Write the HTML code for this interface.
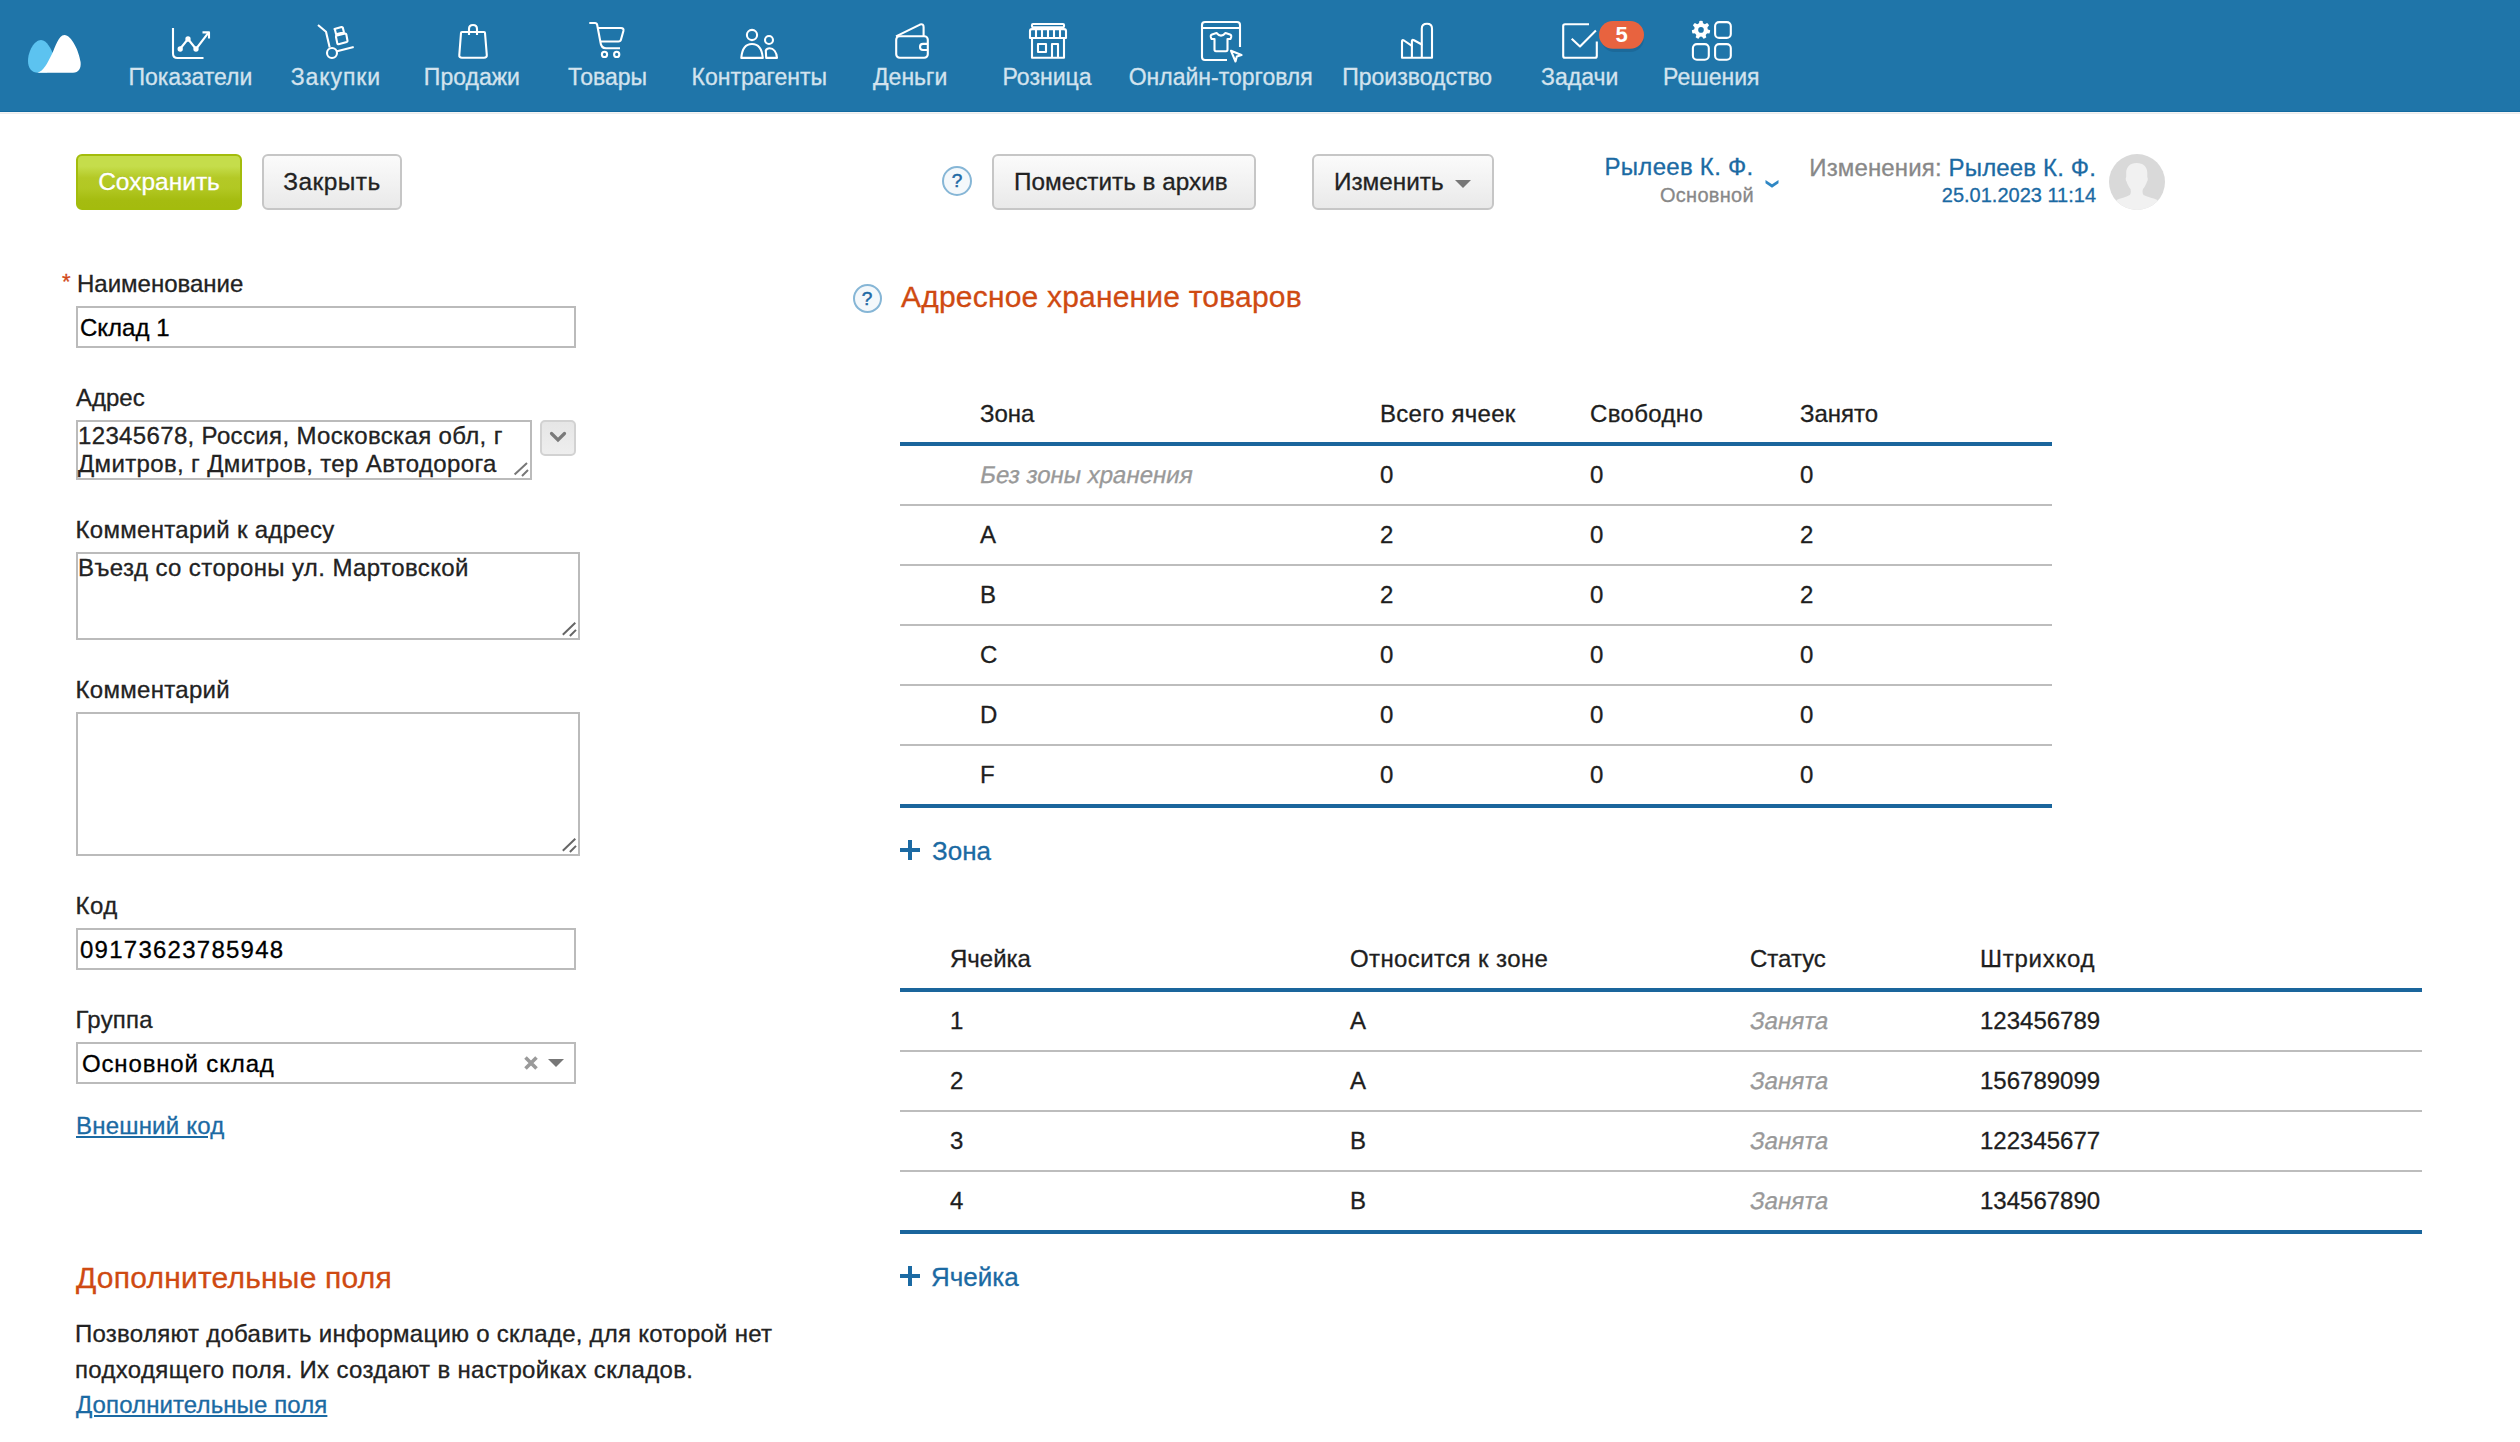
<!DOCTYPE html>
<html><head><meta charset="utf-8">
<style>
html,body{margin:0;padding:0;width:2520px;height:1442px;overflow:hidden;background:#fff;}
body{position:relative;font-family:"Liberation Sans",sans-serif;color:#222;}
.t,.nl,.lbl,.h2,.td{-webkit-text-stroke:0.3px;}
.help{-webkit-text-stroke:0.5px;}
.t{position:absolute;white-space:nowrap;line-height:1;}
.hdr{position:absolute;left:0;top:0;width:2520px;height:111px;background:#1f75a9;border-bottom:1px solid #126aa0;}
.hdrsh{position:absolute;left:0;top:112px;width:2520px;height:2px;background:linear-gradient(#f4f4f4 50%,#ececec 50%);}
.nl{position:absolute;top:65.5px;width:300px;text-align:center;font-size:23px;line-height:1;color:#d3e3ee;white-space:nowrap;}
.btn{position:absolute;box-sizing:border-box;height:56px;top:154px;border:2px solid #c6c6c6;border-radius:6px;background:linear-gradient(#fbfbfb,#e9e9e9);}
.inp{position:absolute;box-sizing:border-box;border:2px solid #bbb;background:#fff;}
.lbl{position:absolute;white-space:nowrap;line-height:1;font-size:24px;color:#222;left:77px;}
.help{position:absolute;box-sizing:border-box;width:30px;height:30px;border-radius:50%;border:2px solid #86b6d6;background:#f4f8fb;color:#1f6aa5;font-size:19px;font-weight:normal;text-align:center;line-height:26px;}
.grip{position:absolute;}
.h2{position:absolute;white-space:nowrap;line-height:1;font-size:30px;color:#cf4a12;}
.link{color:#1b6aa3;}
.bl{position:absolute;height:4px;background:#1a659c;}
.gl{position:absolute;height:2px;background:#bdbdbd;}
.td{position:absolute;white-space:nowrap;line-height:1;font-size:24px;color:#1e1e1e;}
.it{color:#999;transform:skewX(-11deg);transform-origin:0 20px;}
</style></head>
<body>
<!-- HEADER -->
<div class="hdr"></div>
<div class="hdrsh"></div>
<svg style="position:absolute;left:0;top:0" width="2520" height="112" viewBox="0 0 2520 112">
  <!-- logo -->
  <path d="M41 40 C34.5 40 28 51 28 61 C28 68.5 32 72.7 38 72.7 L47 72.7 L54 56 C51 49 47 40 41 40 Z" fill="#5cc3f0"/>
  <path d="M64.4 35 C71.5 35 79 51 80.6 62 C81.3 68.5 78.5 72.7 73 72.7 L37.5 72.7 C43.5 71 47.5 63 51.6 54.7 C55.5 47 58.5 35 64.4 35 Z" fill="#fff"/>
  <g fill="none" stroke="#fff" stroke-width="2.1" stroke-linecap="butt" stroke-linejoin="round">
    <!-- Показатели -->
    <path d="M173 28 V53.5 Q173 58 177.5 58 H203.5"/>
    <path d="M180 49 L188 39 L196 49 L208.5 32.6"/>
    <path d="M202.5 32.4 H209 V38.5"/>
    <circle cx="180.2" cy="49" r="1.6" fill="#fff"/><circle cx="188" cy="39" r="1.6" fill="#fff"/><circle cx="196" cy="49" r="1.6" fill="#fff"/>
    <!-- Закупки -->
    <path d="M318 25 L326 31.7 L329.7 47.5"/>
    <circle cx="332" cy="53" r="5"/>
    <path d="M337 51.3 L353.7 46.9"/>
    <path d="M334.5 29 L341.5 27 Q342.6 26.8 342.9 27.9 L343.9 32.3 L336.1 34.3 L335 29.9 Q334.7 29.2 334.5 29 Z"/>
    <path d="M336.1 35.8 L345 33.6 Q346 33.4 346.3 34.4 L347.5 40.8 Q347.7 41.8 346.7 42.1 L338.6 44.2 Q337.6 44.4 337.3 43.4 L336 37 Z"/>
    <!-- Продажи bag -->
    <path d="M462 32 H484 Q485 32 485 33 L486.8 55 Q487 57.8 484 57.8 H462 Q459 57.8 459.3 55 L461 33 Q461 32 462 32 Z"/>
    <path d="M469 35 V29 Q469 25 473 25 Q477 25 477 29 V35"/>
    <!-- Товары cart -->
    <path d="M589.3 23 H595 Q596.8 23 597.2 25 L600.4 41.9 Q601 48.3 606 48.3 H620"/>
    <path d="M597.8 28 H621 Q624 28 623.4 31 L621 39.5 Q620.5 41.5 618.5 41.5 H600.5"/>
    <circle cx="604.5" cy="54.4" r="2.6"/>
    <circle cx="616.7" cy="54.4" r="2.6"/>
    <!-- Контрагенты -->
    <circle cx="752" cy="35" r="5.1"/>
    <path d="M741.3 57.9 C742 49 746 44 752 44 C758 44 762 49 762.8 57.9 Z"/>
    <circle cx="769" cy="40" r="4"/>
    <path d="M766.2 57.9 L765.8 50.5 C766.5 49 768 48.3 769.5 48.3 C773.5 48.3 776.5 52 777 57.9 Z"/>
    <!-- Деньги wallet -->
    <rect x="896.2" y="36.2" width="31.6" height="21.5" rx="3.5"/>
    <path d="M896 36.4 L920 24.6 Q923.6 23.3 923.6 27 V36"/>
    <path d="M927.8 43.9 H923 Q920 43.9 920 47 Q920 50 923 50 H927.8"/>
    <!-- Розница store -->
    <rect x="1032" y="24" width="32" height="3.2" rx="1"/>
    <path d="M1030 38 V31 Q1030 29.1 1032 29.1 H1064 Q1066 29.1 1066 31 V38 Z"/>
    <path d="M1036 29 V38 M1042 29 V38 M1048 29 V38 M1054 29 V38 M1060 29 V38"/>
    <path d="M1032 38 V57.8 H1064 V38"/>
    <rect x="1038" y="44" width="8" height="8"/>
    <path d="M1052 57.8 V44 H1058 V57.8"/>
    <!-- Онлайн-торговля -->
    <path d="M1240 47 V25 Q1240 22 1237 22 H1205 Q1202 22 1202 25 V57 Q1202 60 1205 60 H1227"/>
    <path d="M1202 28 H1240"/>
    <path d="M1216.5 33 Q1221 38.2 1225.5 33 L1230 34.5 Q1231.5 35 1231.2 37 L1230.5 39 H1227.5 V49.5 Q1227.5 51.2 1226 51.2 H1216 Q1214.5 51.2 1214.5 49.5 V39 H1211.5 L1210.8 37 Q1210.5 35 1212 34.5 Z"/>
    <path d="M1231 50.8 L1241.5 55 L1236.8 56.5 L1235.5 61.5 Z"/>
    <!-- Производство -->
    <path d="M1402 57.8 V41.5 Q1402 39.5 1404 40.5 L1411.9 45.8 V41 Q1411.9 39.2 1414 40.3 L1421.8 44.5 V28.5 Q1421.8 23.8 1427 23.8 Q1432 23.8 1432 28.5 V57.8 Z"/>
    <path d="M1411.9 45.8 V57.8 M1421.8 44.5 V57.8"/>
    <!-- Задачи -->
    <path d="M1589 24.2 H1565 Q1563.2 24.2 1563.2 26 V56 Q1563.2 57.8 1565 57.8 H1595 Q1596.8 57.8 1596.8 56 V41.4"/>
    <path d="M1571.7 38.8 L1580 46.5 L1595.9 30.6"/>
    <!-- Решения -->
    <rect x="1715.1" y="22.1" width="15.7" height="15.8" rx="4"/>
    <rect x="1692.9" y="44.1" width="15.9" height="15.7" rx="4"/>
    <rect x="1715.1" y="44.1" width="15.7" height="15.7" rx="4"/>
  </g>
  <!-- gear -->
  <g transform="translate(1701 29.9)" fill="#fff">
    <circle r="6.9"/>
    <path transform="rotate(0.00)" d="M-2.1 -6 L-1.6 -9 Q0 -9.5 1.6 -9 L2.1 -6 Z"/><path transform="rotate(51.43)" d="M-2.1 -6 L-1.6 -9 Q0 -9.5 1.6 -9 L2.1 -6 Z"/><path transform="rotate(102.86)" d="M-2.1 -6 L-1.6 -9 Q0 -9.5 1.6 -9 L2.1 -6 Z"/><path transform="rotate(154.29)" d="M-2.1 -6 L-1.6 -9 Q0 -9.5 1.6 -9 L2.1 -6 Z"/><path transform="rotate(205.71)" d="M-2.1 -6 L-1.6 -9 Q0 -9.5 1.6 -9 L2.1 -6 Z"/><path transform="rotate(257.14)" d="M-2.1 -6 L-1.6 -9 Q0 -9.5 1.6 -9 L2.1 -6 Z"/><path transform="rotate(308.57)" d="M-2.1 -6 L-1.6 -9 Q0 -9.5 1.6 -9 L2.1 -6 Z"/>
    <circle r="2.8" fill="#1f75a9"/>
  </g>
  <!-- badge -->
  <rect x="1601" y="24.5" width="43" height="27.5" rx="13.75" fill="#1a5f8c" opacity="0.55"/>
  <rect x="1599" y="21" width="45" height="27.7" rx="13.85" fill="#e8633f"/>
</svg>
<div class="t" style="left:1599px;top:24.2px;width:45px;text-align:center;font-size:22px;font-weight:bold;color:#fff;-webkit-text-stroke:0;">5</div>

<div class="nl" style="left:40.4px">Показатели</div>
<div class="nl" style="left:185.9px;letter-spacing:0.9px">Закупки</div>
<div class="nl" style="left:321.9px">Продажи</div>
<div class="nl" style="left:457.5px">Товары</div>
<div class="nl" style="left:609.3px">Контрагенты</div>
<div class="nl" style="left:760.2px">Деньги</div>
<div class="nl" style="left:897px">Розница</div>
<div class="nl" style="left:1070.7px">Онлайн-торговля</div>
<div class="nl" style="left:1267.2px">Производство</div>
<div class="nl" style="left:1429.7px">Задачи</div>
<div class="nl" style="left:1561.3px">Решения</div>

<!-- TOOLBAR -->
<div class="btn" style="left:76px;width:166px;border-color:#a3bc0c;background:linear-gradient(#c5dd4b 0%,#c5dd4b 20%,#b4c926 42%,#b2c823 62%,#a5bc10 85%,#a4bb0e 100%);"></div>
<div class="t" style="left:76px;width:166px;text-align:center;top:169.7px;font-size:24.5px;color:#fff;text-shadow:0 -1px 0 rgba(0,0,0,0.08);">Сохранить</div>
<div class="btn" style="left:262px;width:140px;"></div>
<div class="t" style="left:262px;width:140px;text-align:center;top:169.7px;font-size:24.5px;color:#222;letter-spacing:0.45px;">Закрыть</div>

<div class="help" style="left:942px;top:166px;">?</div>
<div class="btn" style="left:992px;width:264px;"></div>
<div class="t" style="left:1014px;top:169.7px;font-size:24.3px;color:#222;">Поместить в архив</div>
<div class="btn" style="left:1312px;width:182px;"></div>
<div class="t" style="left:1334px;top:169.7px;font-size:24.3px;color:#222;">Изменить</div>
<svg style="position:absolute;left:1455px;top:180px" width="16" height="8"><path d="M0 0 H16 L8 8 Z" fill="#777"/></svg>

<div class="t" style="right:766.5px;top:155.4px;font-size:24px;color:#1b6aa3;letter-spacing:0.28px;">Рылеев К. Ф.</div>
<div class="t" style="right:766px;top:185px;font-size:20px;color:#888;letter-spacing:0.3px;">Основной</div>
<svg style="position:absolute;left:1765px;top:179px" width="14" height="9"><path d="M0.5 1 L7 5.2 L13.5 1 V4.2 L7 8.8 L0.5 4.2 Z" fill="#2f87c4"/></svg>

<div class="t" style="right:424px;top:155.5px;font-size:24px;color:#888;letter-spacing:0.15px;">Изменения: <span style="color:#1b6aa3">Рылеев К. Ф.</span></div>
<div class="t" style="right:424px;top:185px;font-size:20px;color:#1b6aa3;">25.01.2023 11:14</div>
<svg style="position:absolute;left:2109px;top:154px" width="56" height="56" viewBox="0 0 56 56">
  <defs><clipPath id="av"><circle cx="28" cy="28" r="28"/></clipPath></defs>
  <circle cx="28" cy="28" r="28" fill="#d9d9d9"/>
  <g clip-path="url(#av)" fill="#f1f1f1">
    <path d="M27.6 9 C21 9 17.2 13 17.2 19 L17.2 23 C16.5 24 16.5 26.5 17.5 27.5 C18.3 30 19.5 32.5 21.5 35 C22 37 22 39.5 20.8 41 C17 43 11 44.5 7.5 46 L7.5 60 L48.5 60 L48.5 46 C45 44.5 39 43 34.5 41 C33.3 39.5 33.3 37 34 35 C36 32.5 37.2 30 38 27.5 C39 26.5 39 24 38.3 23 L38.3 19 C38.3 13 34.5 9 27.6 9 Z"/>
  </g>
</svg>

<!-- LEFT FORM -->
<div class="t" style="left:62px;top:271px;font-size:22px;color:#d2491a;">*</div>
<div class="lbl" style="top:271.7px;">Наименование</div>
<div class="inp" style="left:76px;top:306px;width:500px;height:42px;"></div>
<div class="t" style="left:80px;top:315.7px;font-size:24px;color:#000;">Склад 1</div>

<div class="lbl" style="top:385.7px;left:76px;">Адрес</div>
<div class="inp" style="left:76px;top:420px;width:456px;height:60px;"></div>
<div class="t" style="left:78px;top:421.7px;font-size:24px;line-height:28px;color:#222;letter-spacing:0.35px;">12345678, Россия, Московская обл, г<br>Дмитров, г Дмитров, тер Автодорога</div>
<svg class="grip" style="left:512px;top:460px" width="18" height="18"><path d="M2.6 14.6 L15 2.9 M10 16 L16 10" stroke="#777" stroke-width="2"/></svg>
<div style="position:absolute;left:540px;top:420px;width:36px;height:36px;box-sizing:border-box;border:2px solid #d2d2d2;border-radius:5px;background:linear-gradient(#e6e6e6,#eeeeee);"></div>
<svg style="position:absolute;left:549px;top:431px" width="18" height="13"><path d="M2.5 2.5 L9 9 L15.5 2.5" fill="none" stroke="#7a7a7a" stroke-width="3.2" stroke-linecap="round" stroke-linejoin="miter"/></svg>

<div class="lbl" style="top:517.7px;left:75.5px;letter-spacing:0.3px;">Комментарий к адресу</div>
<div class="inp" style="left:76px;top:552px;width:504px;height:88px;"></div>
<div class="t" style="left:78px;top:555.7px;font-size:24px;color:#222;letter-spacing:0.4px;">Въезд со стороны ул. Мартовской</div>
<svg class="grip" style="left:560px;top:620px" width="18" height="18"><path d="M2.8 14.8 L15.3 2.8 M9.9 16 L16 9.9" stroke="#666" stroke-width="2"/></svg>

<div class="lbl" style="top:677.7px;left:75.5px;letter-spacing:0.3px;">Комментарий</div>
<div class="inp" style="left:76px;top:712px;width:504px;height:144px;"></div>
<svg class="grip" style="left:560px;top:836px" width="18" height="18"><path d="M2.8 14.8 L15.3 2.8 M9.9 16 L16 9.9" stroke="#666" stroke-width="2"/></svg>

<div class="lbl" style="top:893.7px;left:75.5px;letter-spacing:0.5px;">Код</div>
<div class="inp" style="left:76px;top:928px;width:500px;height:42px;"></div>
<div class="t" style="left:80px;top:937.7px;font-size:24px;color:#000;letter-spacing:1.25px;">09173623785948</div>

<div class="lbl" style="top:1007.7px;left:75.5px;letter-spacing:0.2px;">Группа</div>
<div class="inp" style="left:76px;top:1042px;width:500px;height:42px;"></div>
<div class="t" style="left:82px;top:1051.5px;font-size:24px;color:#000;letter-spacing:0.85px;">Основной склад</div>
<svg style="position:absolute;left:524px;top:1056px" width="14" height="14"><path d="M1.5 1.5 L12.5 12.5 M12.5 1.5 L1.5 12.5" stroke="#9a9a9a" stroke-width="3.6"/></svg>
<svg style="position:absolute;left:548px;top:1059px" width="16" height="8"><path d="M0 0 H16 L8 8 Z" fill="#777"/></svg>

<div class="t link" style="left:76px;top:1113.7px;font-size:24px;letter-spacing:0.2px;text-decoration:underline;text-decoration-thickness:2px;text-underline-offset:2px;">Внешний код</div>

<div class="h2" style="left:76px;top:1263.2px;letter-spacing:0.22px;">Дополнительные поля</div>
<div class="t" style="left:75px;top:1321.7px;font-size:24px;color:#222;letter-spacing:0.25px;">Позволяют добавить информацию о складе, для которой нет</div>
<div class="t" style="left:75px;top:1357.7px;font-size:24px;color:#222;letter-spacing:0.33px;">подходящего поля. Их создают в настройках складов.</div>
<div class="t link" style="left:76px;top:1393.2px;font-size:24px;letter-spacing:0.1px;text-decoration:underline;text-decoration-thickness:2px;text-underline-offset:2px;">Дополнительные поля</div>

<!-- RIGHT -->
<div class="help" style="left:852.5px;top:284.2px;width:29px;height:29px;line-height:25px;">?</div>
<div class="h2" style="left:901px;top:281.5px;letter-spacing:0.2px;">Адресное хранение товаров</div>
<div class="td" style="left:980px;top:401.7px;">Зона</div>
<div class="td" style="left:1380px;top:401.7px;letter-spacing:0.3px;">Всего ячеек</div>
<div class="td" style="left:1590px;top:401.7px;letter-spacing:0.35px;">Свободно</div>
<div class="td" style="left:1800px;top:401.7px;">Занято</div>
<div class="bl" style="left:900px;top:442px;width:1152px;"></div>
<div class="td it" style="left:979px;top:462.7px;">Без зоны хранения</div>
<div class="td" style="left:1380px;top:462.7px;">0</div>
<div class="td" style="left:1590px;top:462.7px;">0</div>
<div class="td" style="left:1800px;top:462.7px;">0</div>
<div class="gl" style="left:900px;top:504px;width:1152px;"></div>
<div class="td" style="left:980px;top:522.7px;">A</div>
<div class="td" style="left:1380px;top:522.7px;">2</div>
<div class="td" style="left:1590px;top:522.7px;">0</div>
<div class="td" style="left:1800px;top:522.7px;">2</div>
<div class="gl" style="left:900px;top:564px;width:1152px;"></div>
<div class="td" style="left:980px;top:582.7px;">B</div>
<div class="td" style="left:1380px;top:582.7px;">2</div>
<div class="td" style="left:1590px;top:582.7px;">0</div>
<div class="td" style="left:1800px;top:582.7px;">2</div>
<div class="gl" style="left:900px;top:624px;width:1152px;"></div>
<div class="td" style="left:980px;top:642.7px;">C</div>
<div class="td" style="left:1380px;top:642.7px;">0</div>
<div class="td" style="left:1590px;top:642.7px;">0</div>
<div class="td" style="left:1800px;top:642.7px;">0</div>
<div class="gl" style="left:900px;top:684px;width:1152px;"></div>
<div class="td" style="left:980px;top:702.7px;">D</div>
<div class="td" style="left:1380px;top:702.7px;">0</div>
<div class="td" style="left:1590px;top:702.7px;">0</div>
<div class="td" style="left:1800px;top:702.7px;">0</div>
<div class="gl" style="left:900px;top:744px;width:1152px;"></div>
<div class="td" style="left:980px;top:762.7px;">F</div>
<div class="td" style="left:1380px;top:762.7px;">0</div>
<div class="td" style="left:1590px;top:762.7px;">0</div>
<div class="td" style="left:1800px;top:762.7px;">0</div>
<div class="bl" style="left:900px;top:804px;width:1152px;"></div>
<div style="position:absolute;left:900px;top:848px;width:20px;height:4.2px;background:#1b6aa3;"></div>
<div style="position:absolute;left:907.9px;top:840px;width:4.2px;height:20px;background:#1b6aa3;"></div>
<div class="t link" style="left:932px;top:838px;font-size:26px;">Зона</div>
<div class="td" style="left:950px;top:946.7px;">Ячейка</div>
<div class="td" style="left:1350px;top:946.7px;letter-spacing:0.4px;">Относится к зоне</div>
<div class="td" style="left:1750px;top:946.7px;">Статус</div>
<div class="td" style="left:1980px;top:946.7px;letter-spacing:0.75px;">Штрихкод</div>
<div class="bl" style="left:900px;top:988px;width:1522px;"></div>
<div class="td" style="left:950px;top:1008.7px;">1</div>
<div class="td" style="left:1350px;top:1008.7px;">A</div>
<div class="td it" style="left:1748.5px;top:1008.7px;">Занята</div>
<div class="td" style="left:1980px;top:1008.7px;">123456789</div>
<div class="gl" style="left:900px;top:1050px;width:1522px;"></div>
<div class="td" style="left:950px;top:1068.7px;">2</div>
<div class="td" style="left:1350px;top:1068.7px;">A</div>
<div class="td it" style="left:1748.5px;top:1068.7px;">Занята</div>
<div class="td" style="left:1980px;top:1068.7px;">156789099</div>
<div class="gl" style="left:900px;top:1110px;width:1522px;"></div>
<div class="td" style="left:950px;top:1128.7px;">3</div>
<div class="td" style="left:1350px;top:1128.7px;">B</div>
<div class="td it" style="left:1748.5px;top:1128.7px;">Занята</div>
<div class="td" style="left:1980px;top:1128.7px;">122345677</div>
<div class="gl" style="left:900px;top:1170px;width:1522px;"></div>
<div class="td" style="left:950px;top:1188.7px;">4</div>
<div class="td" style="left:1350px;top:1188.7px;">B</div>
<div class="td it" style="left:1748.5px;top:1188.7px;">Занята</div>
<div class="td" style="left:1980px;top:1188.7px;">134567890</div>
<div class="bl" style="left:900px;top:1230px;width:1522px;"></div>
<div style="position:absolute;left:900px;top:1274px;width:20px;height:4.2px;background:#1b6aa3;"></div>
<div style="position:absolute;left:907.9px;top:1266px;width:4.2px;height:20px;background:#1b6aa3;"></div>
<div class="t link" style="left:931px;top:1264px;font-size:26px;">Ячейка</div>
</body></html>
